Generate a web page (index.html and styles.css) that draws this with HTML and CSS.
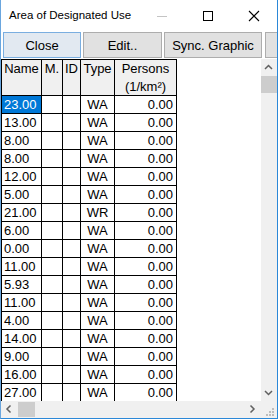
FILE: index.html
```html
<!DOCTYPE html>
<html>
<head>
<meta charset="utf-8">
<title>Area of Designated Use</title>
<link rel="stylesheet" href="styles.css">
</head>
<body>
<div class="window">
  <div class="titlebar">
    <span class="title">Area of Designated Use</span>
    <div class="caption">
      <span class="cap-btn"><svg width="46" height="20" viewBox="0 0 46 20"><line x1="18" y1="10.5" x2="28" y2="10.5" stroke="#c4c4c4" stroke-width="1"/></svg></span>
      <span class="cap-btn"><svg width="46" height="20" viewBox="0 0 46 20"><rect x="18.5" y="5.5" width="9" height="9" fill="none" stroke="#000" stroke-width="1"/></svg></span>
      <span class="cap-btn"><svg width="46" height="20" viewBox="0 0 46 20"><path d="M18 5 L28 15 M28 5 L18 15" stroke="#000" stroke-width="1.1" fill="none"/></svg></span>
    </div>
  </div>
  <div class="toolbar">
    <button class="btn btn-default btn-close">Close</button>
    <button class="btn btn-edit">Edit..</button>
    <button class="btn btn-sync">Sync. Graphic</button>
    <button class="btn btn-more"></button>
  </div>
  <div class="client">
    <div class="viewport">
      <div class="grid">
        <div class="cell head">Name</div>
        <div class="cell head">M.</div>
        <div class="cell head">ID</div>
        <div class="cell head">Type</div>
        <div class="cell head">Persons<br>(1/km²)</div>

        <div class="cell c-name sel">23.00</div><div class="cell"></div><div class="cell"></div><div class="cell c-type">WA</div><div class="cell c-num">0.00</div>
        <div class="cell c-name">13.00</div><div class="cell"></div><div class="cell"></div><div class="cell c-type">WA</div><div class="cell c-num">0.00</div>
        <div class="cell c-name">8.00</div><div class="cell"></div><div class="cell"></div><div class="cell c-type">WA</div><div class="cell c-num">0.00</div>
        <div class="cell c-name">8.00</div><div class="cell"></div><div class="cell"></div><div class="cell c-type">WA</div><div class="cell c-num">0.00</div>
        <div class="cell c-name">12.00</div><div class="cell"></div><div class="cell"></div><div class="cell c-type">WA</div><div class="cell c-num">0.00</div>
        <div class="cell c-name">5.00</div><div class="cell"></div><div class="cell"></div><div class="cell c-type">WA</div><div class="cell c-num">0.00</div>
        <div class="cell c-name">21.00</div><div class="cell"></div><div class="cell"></div><div class="cell c-type">WR</div><div class="cell c-num">0.00</div>
        <div class="cell c-name">6.00</div><div class="cell"></div><div class="cell"></div><div class="cell c-type">WA</div><div class="cell c-num">0.00</div>
        <div class="cell c-name">0.00</div><div class="cell"></div><div class="cell"></div><div class="cell c-type">WA</div><div class="cell c-num">0.00</div>
        <div class="cell c-name">11.00</div><div class="cell"></div><div class="cell"></div><div class="cell c-type">WA</div><div class="cell c-num">0.00</div>
        <div class="cell c-name">5.93</div><div class="cell"></div><div class="cell"></div><div class="cell c-type">WA</div><div class="cell c-num">0.00</div>
        <div class="cell c-name">11.00</div><div class="cell"></div><div class="cell"></div><div class="cell c-type">WA</div><div class="cell c-num">0.00</div>
        <div class="cell c-name">4.00</div><div class="cell"></div><div class="cell"></div><div class="cell c-type">WA</div><div class="cell c-num">0.00</div>
        <div class="cell c-name">14.00</div><div class="cell"></div><div class="cell"></div><div class="cell c-type">WA</div><div class="cell c-num">0.00</div>
        <div class="cell c-name">9.00</div><div class="cell"></div><div class="cell"></div><div class="cell c-type">WA</div><div class="cell c-num">0.00</div>
        <div class="cell c-name">16.00</div><div class="cell"></div><div class="cell"></div><div class="cell c-type">WA</div><div class="cell c-num">0.00</div>
        <div class="cell c-name">27.00</div><div class="cell"></div><div class="cell"></div><div class="cell c-type">WA</div><div class="cell c-num">0.00</div>
      </div>
    </div>
    <div class="vscroll">
      <div class="sb-btn v"><svg width="16" height="17" viewBox="0 0 16 17"><polyline points="4,10 7.5,6.5 11,10" fill="none" stroke="#606060" stroke-width="1.5"/></svg></div>
      <div class="vthumb"></div>
      <div class="sb-fill"></div>
      <div class="sb-btn v"><svg width="16" height="17" viewBox="0 0 16 17"><polyline points="4,7 7.5,10.5 11,7" fill="none" stroke="#606060" stroke-width="1.5"/></svg></div>
    </div>
    <div class="hscroll">
      <div class="sb-btn h"><svg width="17" height="17" viewBox="0 0 17 17"><polyline points="9.5,4.5 6,8 9.5,11.5" fill="none" stroke="#606060" stroke-width="1.5"/></svg></div>
      <div class="hthumb"></div>
      <div class="sb-fill"></div>
      <div class="sb-btn h"><svg width="17" height="17" viewBox="0 0 17 17"><polyline points="6.5,4.5 10,8 6.5,11.5" fill="none" stroke="#606060" stroke-width="1.5"/></svg></div>
    </div>
    <div class="grip">
      <svg width="16" height="17" viewBox="0 0 16 17">
        <rect x="11" y="7" width="2" height="2" fill="#bdbdbd"/>
        <rect x="8" y="10" width="2" height="2" fill="#bdbdbd"/>
        <rect x="11" y="10" width="2" height="2" fill="#bdbdbd"/>
        <rect x="5" y="13" width="2" height="2" fill="#bdbdbd"/>
        <rect x="8" y="13" width="2" height="2" fill="#bdbdbd"/>
        <rect x="11" y="13" width="2" height="2" fill="#bdbdbd"/>
      </svg>
    </div>
  </div>
</div>
</body>
</html>
```

FILE: styles.css
```css
* { box-sizing: border-box; }
html, body { margin: 0; padding: 0; background: #fff; }
body { width: 278px; height: 419px; overflow: hidden; font-family: "Liberation Sans", Arial, sans-serif; }

.window {
  width: 278px;
  height: 419px;
  background: #fff;
  border-left: 1px solid #6aa6de;
  border-right: 1px solid #2b88d8;
  border-bottom: 1px solid #2b88d8;
  display: flex;
  flex-direction: column;
  overflow: hidden;
}

.titlebar {
  height: 31px;
  flex: none;
  display: flex;
  align-items: center;
}
.title {
  padding-left: 8px;
  font-size: 11.5px;
  color: #000;
  padding-bottom: 1px;
}
.caption { margin-left: auto; display: flex; }
.cap-btn { width: 46px; height: 20px; display: block; }
.cap-btn svg { display: block; }

.toolbar {
  height: 28px;
  flex: none;
  display: flex;
  gap: 2px;
  padding: 1px 0 0 2px;
  overflow: hidden;
}
.btn {
  height: 26px;
  margin: 0;
  padding: 0;
  font-family: "Liberation Sans", Arial, sans-serif;
  font-size: 13px;
  color: #000;
  background: #e1e1e1;
  border: 1px solid #adadad;
  flex: none;
}
.btn-default { background: #e2e9f1; border-color: #7aaee0; }
.btn-close { width: 78px; }
.btn-edit { width: 79px; }
.btn-sync { width: 98px; }
.btn-more { width: 40px; margin-left: 1px; }

.client {
  flex: 1;
  display: grid;
  grid-template-columns: 260px 16px;
  grid-template-rows: 342px 17px;
}
.viewport { overflow: hidden; background: #fff; }

.grid {
  display: grid;
  grid-template-columns: 40px 21px 18px 34px 62px;
  width: max-content;
  border-left: 1px solid #000;
  border-top: 1px solid #000;
  font-size: 13px;
  color: #000;
}
.cell {
  height: 18px;
  line-height: 17px;
  border-right: 1px solid #000;
  border-bottom: 1px solid #000;
  white-space: nowrap;
  overflow: hidden;
}
.head {
  height: 36px;
  line-height: 18px;
  background: #f0f0f0;
  text-align: center;
  overflow: visible;
}
.c-name { padding-left: 2px; }
.c-type { text-align: center; }
.c-num { text-align: right; padding-right: 3px; }
.sel { background: #0078d7; color: #fff; }

.vscroll {
  background: #f0f0f0;
  display: flex;
  flex-direction: column;
}
.sb-btn { flex: none; }
.sb-btn svg { display: block; }
.sb-btn.v { height: 17px; }
.sb-btn.h { width: 17px; }
.vthumb { height: 17px; background: #cdcdcd; flex: none; }
.sb-fill { flex: 1; }

.hscroll {
  background: #f0f0f0;
  display: flex;
}
.hthumb { width: 17px; height: 15px; margin-top: 1px; background: #cdcdcd; flex: none; }

.grip { background: #f0f0f0; }
.grip svg { display: block; }
```
